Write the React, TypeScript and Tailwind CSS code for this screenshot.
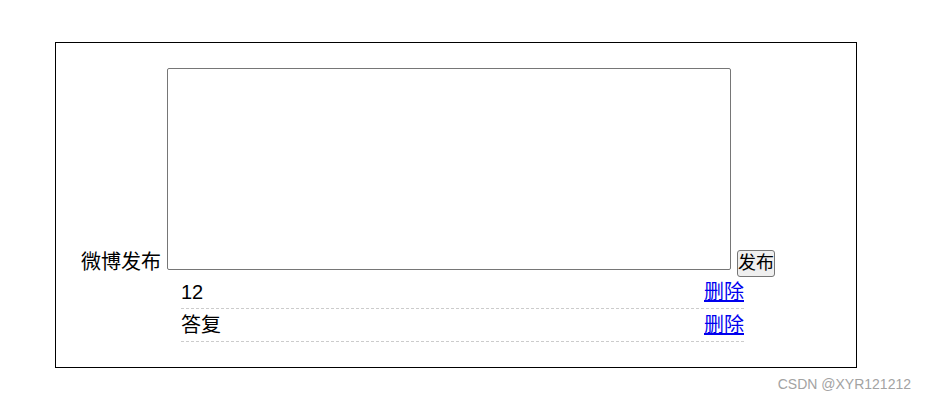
import React from 'react'

const items = ['12', '答复']

export default function App() {
  return (
    <div
      className="relative w-[926px] h-[400px] bg-white text-black"
      style={{ fontFamily: '"Liberation Sans", "Noto Sans CJK SC", sans-serif' }}
    >
      <div className="ml-[55px] pt-[42px]">
        <div className="w-[802px] border border-black p-[25px]">
          <div className="flex items-start h-[209px]">
            <span className="mt-[184px] w-[80px] text-[20px] leading-[20px] whitespace-nowrap">微博发布</span>
            <textarea className="ml-[6px] w-[564px] h-[202px] border border-[#767676] rounded-[2px] resize-none outline-none" />
            <button className="ml-[6px] mt-[182px] w-[38px] h-[27px] border border-[#767676] rounded-[3px] bg-[#efefef] text-[18px] leading-[25px] p-0">
              发布
            </button>
          </div>
          <ul className="-mt-px ml-[100px] w-[563px]">
            {items.map((text, i) => (
              <li
                key={i}
                className="flex justify-between border-b border-dashed border-[#cccccc] text-[20px] leading-[32px]"
              >
                <span>{text}</span>
                <a href="#" className="text-[#0000ee] underline">删除</a>
              </li>
            ))}
          </ul>
        </div>
      </div>
      <div className="absolute right-[15px] top-[375px] text-[14px] leading-[18px] text-[#a3a3a3]">
        CSDN @XYR121212
      </div>
    </div>
  )
}
